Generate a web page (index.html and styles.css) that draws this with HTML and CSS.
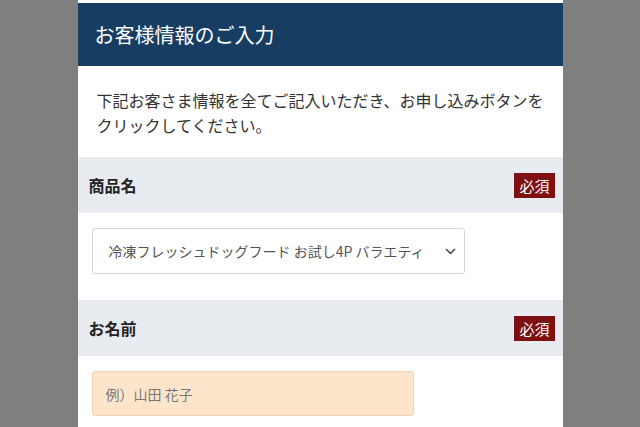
FILE: index.html
```html
<!DOCTYPE html>
<html lang="ja">
<head>
<meta charset="utf-8">
<link rel="stylesheet" href="styles.css">
</head>
<body>
<div class="panel">
  <div class="header">お客様情報のご入力</div>
  <p class="intro">下記お客さま情報を全てご記入いただき、お申し込みボタンをクリックしてください。</p>
  <div class="band"><span class="label">商品名</span><span class="badge">必須</span></div>
  <div class="field">
    <div class="select">
      <span class="select-text">冷凍フレッシュドッグフード お試し4P バラエティ</span>
      <svg class="chev" width="11" height="7" viewBox="0 0 11 7"><path d="M1 1 L5.5 5.5 L10 1" fill="none" stroke="#444" stroke-width="1.5"/></svg>
    </div>
  </div>
  <div class="band"><span class="label">お名前</span><span class="badge">必須</span></div>
  <div class="field">
    <div class="input">例）山田 花子</div>
  </div>
</div>
</body>
</html>
```

FILE: styles.css
```css
html, body {
  margin: 0;
  padding: 0;
}
body {
  background: #7f7f7f;
  font-family: "Noto Sans CJK JP", "Noto Sans", sans-serif;
  height: 427px;
  overflow: hidden;
}
.panel {
  width: 485px;
  margin: 0 auto;
  background: #fff;
  padding-top: 3px;
  min-height: 424px;
}
.header {
  height: 63px;
  background: #173e62;
  color: #fff;
  font-size: 20px;
  display: flex;
  align-items: center;
  padding-left: 17px;
}
.intro {
  margin: 0;
  padding: 22px 19px 19px 19px;
  font-size: 16px;
  line-height: 25px;
  color: #333;
}
.band {
  height: 56px;
  background: #e8ebef;
  display: flex;
  align-items: center;
  justify-content: space-between;
  padding: 0 8px 0 11px;
}
.label {
  font-size: 16px;
  font-weight: bold;
  color: #222;
}
.badge {
  background: #7d1010;
  color: #fff;
  font-size: 15px;
  line-height: 25px;
  padding: 0 5px;
}
.field {
  padding: 15px 14px 26px 14px;
}
.select {
  position: relative;
  width: 373px;
  height: 46px;
  box-sizing: border-box;
  border: 1px solid #d6d6d6;
  border-radius: 3px;
  display: flex;
  align-items: center;
  padding-left: 16px;
  font-size: 14px;
  color: #555;
}
.chev {
  position: absolute;
  right: 8px;
  top: 19px;
}
.input {
  width: 322px;
  height: 45px;
  box-sizing: border-box;
  background: #fde5cc;
  border: 1px solid #f2d2b2;
  border-radius: 3px;
  display: flex;
  align-items: center;
  padding-left: 13px;
  font-size: 14px;
  color: #777;
}
```
